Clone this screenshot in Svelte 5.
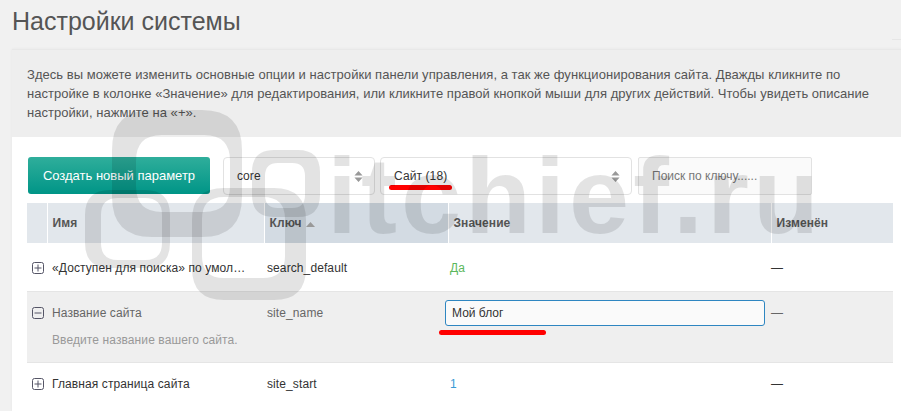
<script>
  const rows = [
    { name: "«Доступен для поиска» по умол…", key: "search_default", value: "Да", tone: "green" },
    { name: "Название сайта", key: "site_name", open: true, desc: "Введите название вашего сайта." },
    { name: "Главная страница сайта", key: "site_start", value: "1", tone: "blue" }
  ];

  // rounded rect as a subpath, for the watermark rings
  const rr = ([x0, y0, x1, y1, r]) =>
    `M${x0 + r} ${y0}H${x1 - r}Q${x1} ${y0} ${x1} ${y0 + r}V${y1 - r}Q${x1} ${y1} ${x1 - r} ${y1}H${x0 + r}Q${x0} ${y1} ${x0} ${y1 - r}V${y0 + r}Q${x0} ${y0} ${x0 + r} ${y0}Z`;

  const rings = [
    [[112, 110, 242, 237, 40], [136, 135, 230, 212, 26]],
    [[85, 190, 170, 268, 25], [101, 198, 162, 260, 17]],
    [[192, 188, 306, 300, 32], [202, 197, 285, 278, 22]],
    [[252, 150, 320, 217, 22], [265, 163, 305, 208, 13]]
  ];
</script>

<div class="page">
  <h1>Настройки системы</h1>
  <div class="corner"></div>

  <section class="card">
    <p class="intro">
      Здесь вы можете изменить основные опции и настройки панели управления, а так же функционирования сайта. Дважды кликните по настройке в колонке «Значение» для редактирования, или кликните правой кнопкой мыши для других действий. Чтобы увидеть описание настройки, нажмите на «+».
    </p>

    <div class="body">
      <div class="toolbar">
        <button type="button">Создать новый параметр</button>
        <div class="select small">
          <span>core</span>
          <svg width="9" height="11" viewBox="0 0 10 12"><path d="M5 0l4.500 5h-9zM5 12l-4.500-5h9z" /></svg>
        </div>
        <div class="select wide">
          <span>Сайт (18)</span>
          <svg width="9" height="11" viewBox="0 0 10 12"><path d="M5 0l4.500 5h-9zM5 12l-4.500-5h9z" /></svg>
          <i class="redline first"></i>
        </div>
        <input class="search" placeholder="Поиск по ключу......" />
      </div>

      <table>
        <colgroup>
          <col style="width: 20px" />
          <col style="width: 217px" />
          <col style="width: 184px" />
          <col style="width: 323px" />
          <col />
        </colgroup>
        <thead>
          <tr>
            <th></th>
            <th>Имя</th>
            <th class="sorted">Ключ <svg width="9" height="5" viewBox="0 0 9 5"><path d="M4.500 0l4.500 5h-9z" /></svg></th>
            <th>Значение</th>
            <th>Изменён</th>
          </tr>
        </thead>
        <tbody>
          {#each rows as row}
            <tr class:open={row.open}>
              <td class="toggle">
                <svg width="12" height="12" viewBox="0 0 12 12">
                  <rect x=".5" y=".5" width="11" height="11" rx="2" />
                  <path d="M2.500 6h7" />
                  {#if !row.open}<path d="M6 2.500v7" />{/if}
                </svg>
              </td>
              <td class="name">
                {row.name}
                {#if row.desc}<div class="desc">{row.desc}</div>{/if}
              </td>
              <td class="key">{row.key}</td>
              <td class="value {row.tone ?? ''}">
                {#if row.open}
                  <div class="edit">
                    <input value="Мой блог" />
                    <i class="redline second"></i>
                  </div>
                {:else}
                  {row.value}
                {/if}
              </td>
              <td class="changed">—</td>
            </tr>
          {/each}
        </tbody>
      </table>
    </div>
  </section>

  <!-- watermark over the whole shot -->
  <svg class="logo" width="901" height="411" viewBox="0 0 901 411">
    {#each rings as [outer, inner]}
      <path d={rr(outer) + rr(inner)} fill-rule="evenodd" fill="#000" fill-opacity=".11" />
    {/each}
  </svg>
  <div class="mark">itchief.ru</div>
</div>

<style>
  :global(body) {
    margin: 0;
    background: #f1f1f1;
    overflow: hidden;
  }

  .page {
    position: relative;
    display: flex;
    flex-direction: column;
    height: 411px;
    overflow: hidden;
    font-family: "Liberation Sans", Arial, sans-serif;
    font-size: 12px;
    letter-spacing: 0.1px;
    color: #333;
  }

  h1 {
    margin: 0;
    padding: 5px 0 0 12px;
    height: 49px;
    flex: none;
    box-sizing: border-box;
    font-size: 25px;
    line-height: 32px;
    font-weight: 400;
    letter-spacing: 0;
    color: #555;
  }

  .corner {
    position: absolute;
    right: 0;
    top: 39px;
    width: 9px;
    height: 1px;
    background: #e6e6e6;
  }

  .card {
    flex: 1;
    margin-left: 12px;
    background: #fff;
    border-top: 1px solid #e8e8e8;
    box-shadow: 0 0 3px rgba(0, 0, 0, 0.05);
  }

  .intro {
    margin: 0;
    height: 87px;
    box-sizing: border-box;
    padding: 15px 20px 0 15px;
    background: #eee;
    font-size: 13px;
    letter-spacing: 0.04px;
    line-height: 19px;
    color: #555;
  }

  .body {
    padding: 20px 8px 0 15px;
  }

  .toolbar {
    display: flex;
    height: 38px;
    margin-bottom: 8px;
  }

  button {
    width: 182px;
    height: 37px;
    margin-left: 1px;
    border: none;
    border-radius: 3px;
    background: linear-gradient(#2fae9b, #009587);
    color: #fff;
    font: inherit;
    font-size: 13px;
    padding: 0;
  }

  .select {
    position: relative;
    display: flex;
    align-items: center;
    justify-content: space-between;
    box-sizing: border-box;
    padding: 0 11px 0 13px;
    border: 1px solid #e2e2e2;
    border-radius: 4px;
    color: #333;
  }

  .select svg {
    fill: #999;
  }

  .small {
    width: 152px;
    margin-left: 13px;
  }

  .wide {
    width: 252px;
    margin-left: 5px;
  }

  .search {
    width: 174px;
    margin-left: 6px;
    box-sizing: border-box;
    padding: 0 13px;
    border: 1px solid #e2e2e2;
    border-radius: 2px;
    background: #fafafa;
    font: inherit;
    outline: none;
  }

  .search::placeholder {
    color: #777;
    opacity: 1;
  }

  .redline {
    position: absolute;
    display: block;
    height: 5px;
    border-radius: 3px;
    background: #f00;
  }

  .first {
    left: 8px;
    top: 27px;
    width: 63px;
  }

  .second {
    left: -6px;
    top: 30px;
    width: 107px;
  }

  table {
    width: 866px;
    table-layout: fixed;
    border-collapse: collapse;
  }

  th {
    height: 40px;
    padding: 0 5px;
    box-sizing: border-box;
    background: #e2e7ec;
    border-left: 1px solid #fff;
    text-align: left;
    font-weight: 700;
    color: #555;
  }

  th:first-child {
    border-left: none;
  }

  th.sorted {
    background: #d3dbe3;
  }

  th svg {
    fill: #999;
    margin-left: 1px;
  }

  td {
    height: 48px;
    padding: 2px 0 0;
    box-sizing: border-box;
    border-bottom: 1px solid #e5e5e5;
    color: #333;
  }

  tbody tr:last-child td {
    height: 42px;
    border-bottom: none;
  }

  .toggle {
    padding-left: 5px;
  }

  .toggle svg {
    display: block;
    fill: none;
    stroke: #556;
  }

  .name {
    padding-left: 5px;
  }

  .key {
    padding-left: 3px;
  }

  .value {
    padding-left: 2px;
  }

  .green {
    color: #5cb85c;
  }

  .blue {
    color: #3a9bd5;
  }

  tr.open td {
    height: 71px;
    padding-top: 10px;
    vertical-align: top;
    background: #efefef;
    color: #666;
  }

  .open .toggle svg {
    margin-top: 5px;
  }

  .open .name,
  .open .key,
  .open .changed {
    line-height: 22px;
  }

  .desc {
    margin-top: 7px;
    color: #999;
    line-height: 19px;
  }

  .edit {
    position: relative;
    margin-left: -5px;
    width: 320px;
  }

  .edit input {
    display: block;
    width: 100%;
    height: 26px;
    box-sizing: border-box;
    padding: 0 6px;
    margin-top: -2px;
    border: 1px solid #2e86c1;
    border-radius: 3px;
    background: #fafafa;
    font: inherit;
    color: #333;
    outline: none;
  }

  .logo {
    position: absolute;
    left: 0;
    top: 0;
    pointer-events: none;
  }

  .mark {
    position: absolute;
    left: 327px;
    top: 133px;
    font-size: 108px;
    letter-spacing: 4px;
    line-height: 126px;
    font-weight: 700;
    color: rgba(0, 0, 0, 0.11);
    pointer-events: none;
  }
</style>
